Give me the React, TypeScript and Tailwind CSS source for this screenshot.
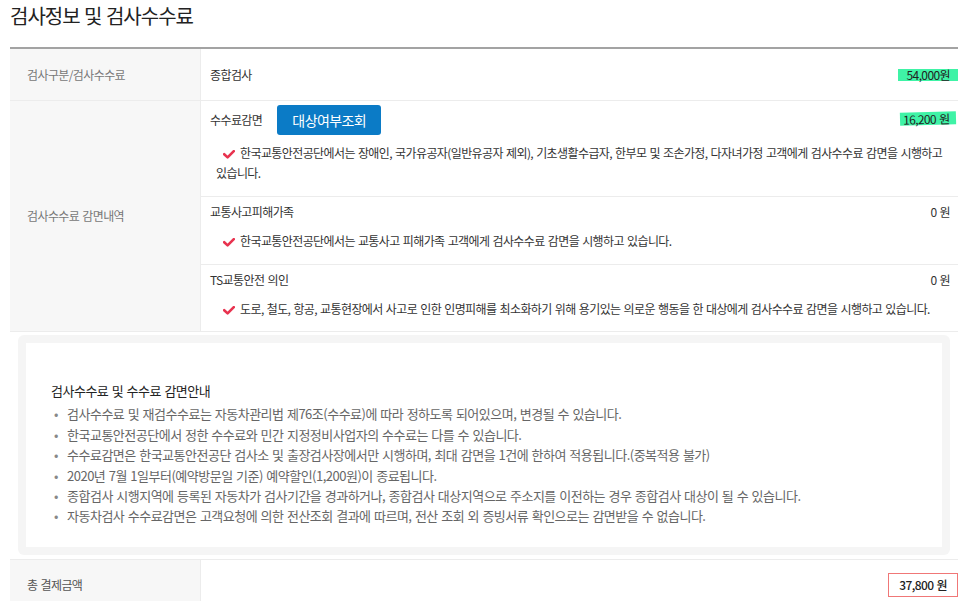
import React from 'react';

const font = "font-['Noto_Sans_CJK_KR','Noto_Sans',sans-serif]";

function Check() {
  return (
    <svg
      viewBox="0 0 12 9"
      className="inline-block w-[12px] h-[9px] ml-[7px] mr-[5px]"
    >
      <path
        d="M1.2 4.2 L4.6 7.4 L10.8 1.2"
        fill="none"
        stroke="#e8334f"
        strokeWidth="2.6"
        strokeLinecap="round"
        strokeLinejoin="round"
      />
    </svg>
  );
}

function SubRow({
  title,
  value,
  note,
  button,
  last,
}: {
  title: string;
  value: React.ReactNode;
  note: string;
  button?: boolean;
  last?: boolean;
}) {
  return (
    <div
      className={`pl-[9px] pr-[8px] pt-[4px] ${
        last ? 'pb-[12px]' : 'pb-[13px] border-b border-[#ececec]'
      }`}
    >
      <div
        className={`flex items-center justify-between ${
          button ? 'h-[30px]' : 'h-[22px]'
        }`}
      >
        <div className="flex items-center">
          <span className="text-[#333]">{title}</span>
          {button && (
            <button className="ml-[15px] h-[30px] w-[104px] rounded-[3px] bg-[#0b7bc6] text-white text-[14px] tracking-[-0.6px]">
              대상여부조회
            </button>
          )}
        </div>
        {value}
      </div>
      <p className="pl-[6px] mt-[8px] leading-[20px] text-[#333]">
        <Check />
        {note}
      </p>
    </div>
  );
}

export default function App() {
  const notes = [
    '검사수수료 및 재검수수료는 자동차관리법 제76조(수수료)에 따라 정하도록 되어있으며, 변경될 수 있습니다.',
    '한국교통안전공단에서 정한 수수료와 민간 지정정비사업자의 수수료는 다를 수 있습니다.',
    '수수료감면은 한국교통안전공단 검사소 및 출장검사장에서만 시행하며, 최대 감면을 1건에 한하여 적용됩니다.(중복적용 불가)',
    '2020년 7월 1일부터(예약방문일 기준) 예약할인(1,200원)이 종료됩니다.',
    '종합검사 시행지역에 등록된 자동차가 검사기간을 경과하거나, 종합검사 대상지역으로 주소지를 이전하는 경우 종합검사 대상이 될 수 있습니다.',
    '자동차검사 수수료감면은 고객요청에 의한 전산조회 결과에 따르며, 전산 조회 외 증빙서류 확인으로는 감면받을 수 없습니다.',
  ];

  return (
    <div
      className={`${font} bg-white min-h-screen pl-[10px] pr-[8px] text-[12px] tracking-[-0.6px] [word-spacing:1px] text-[#333]`}
    >
      <h2 className="h-[47px] pt-[1px] text-[20px] leading-[30px] tracking-[-1px] text-[#222] font-normal">
        검사정보 및 검사수수료
      </h2>

      <div className="border-t-2 border-[#a3a3a3]">
        {/* 검사구분 */}
        <div className="flex h-[52px] border-b border-[#ececec]">
          <div className="w-[190px] shrink-0 bg-[#f7f7f7] pl-[17px] flex items-center text-[#777]">
            검사구분/검사수수료
          </div>
          <div className="flex-1 border-l border-[#ececec] pl-[9px] flex items-center justify-between">
            <span className="text-[#333]">종합검사</span>
            <span className="bg-[#3ff3a6] pl-[9px] pr-[8px] h-[12px] leading-[12px] text-[#222]">
              54,000원
            </span>
          </div>
        </div>

        {/* 감면내역 */}
        <div className="flex border-b border-[#ececec]">
          <div className="w-[190px] shrink-0 bg-[#f7f7f7] pl-[17px] flex items-center text-[#777]">
            검사수수료 감면내역
          </div>
          <div className="flex-1 border-l border-[#ececec]">
            <SubRow
              title="수수료감면"
              button
              value={
                <span className="self-start mt-[7px] -mr-[6px] bg-[#3ff3a6] pl-[3px] pr-[6px] h-[13px] leading-[13px] text-[#222] -rotate-[1.5deg]">
                  16,200 원
                </span>
              }
              note="한국교통안전공단에서는 장애인, 국가유공자(일반유공자 제외), 기초생활수급자, 한부모 및 조손가정, 다자녀가정 고객에게 검사수수료 감면을 시행하고 있습니다."
            />
            <SubRow
              title="교통사고피해가족"
              value={<span className="text-[#333]">0 원</span>}
              note="한국교통안전공단에서는 교통사고 피해가족 고객에게 검사수수료 감면을 시행하고 있습니다."
            />
            <SubRow
              title="TS교통안전 의인"
              last
              value={<span className="text-[#333]">0 원</span>}
              note="도로, 철도, 항공, 교통현장에서 사고로 인한 인명피해를 최소화하기 위해 용기있는 의로운 행동을 한 대상에게 검사수수료 감면을 시행하고 있습니다."
            />
          </div>
        </div>

        {/* 안내 */}
        <div className="border-b border-[#ececec] pt-[3px] pb-[4px] pl-[8px] pr-[8px]">
          <div className="bg-[#f5f5f5] rounded-[6px] p-[8px]">
            <div className="bg-white pl-[25px] pr-[20px] pt-[38px] pb-[20px] text-[13px] tracking-[-0.5px] leading-[20.4px]">
              <p className="text-[#222] mb-[3px]">검사수수료 및 수수료 감면안내</p>
              <ul>
                {notes.map((n) => (
                  <li key={n} className="flex text-[#666]">
                    <span className="w-[16px] shrink-0 pl-[3px] text-[#888]">•</span>
                    <span>{n}</span>
                  </li>
                ))}
              </ul>
            </div>
          </div>
        </div>

        {/* 총 결제금액 */}
        <div className="flex h-[52px] border-b border-[#ececec]">
          <div className="w-[190px] shrink-0 bg-[#f7f7f7] pl-[17px] flex items-center text-[#555]">
            총 결제금액
          </div>
          <div className="flex-1 border-l border-[#ececec] flex items-center justify-end">
            <span className="h-[24px] px-[10px] flex items-center border-[1.5px] border-[#f07777] text-[#222] font-medium">
              37,800 원
            </span>
          </div>
        </div>
      </div>
    </div>
  );
}
